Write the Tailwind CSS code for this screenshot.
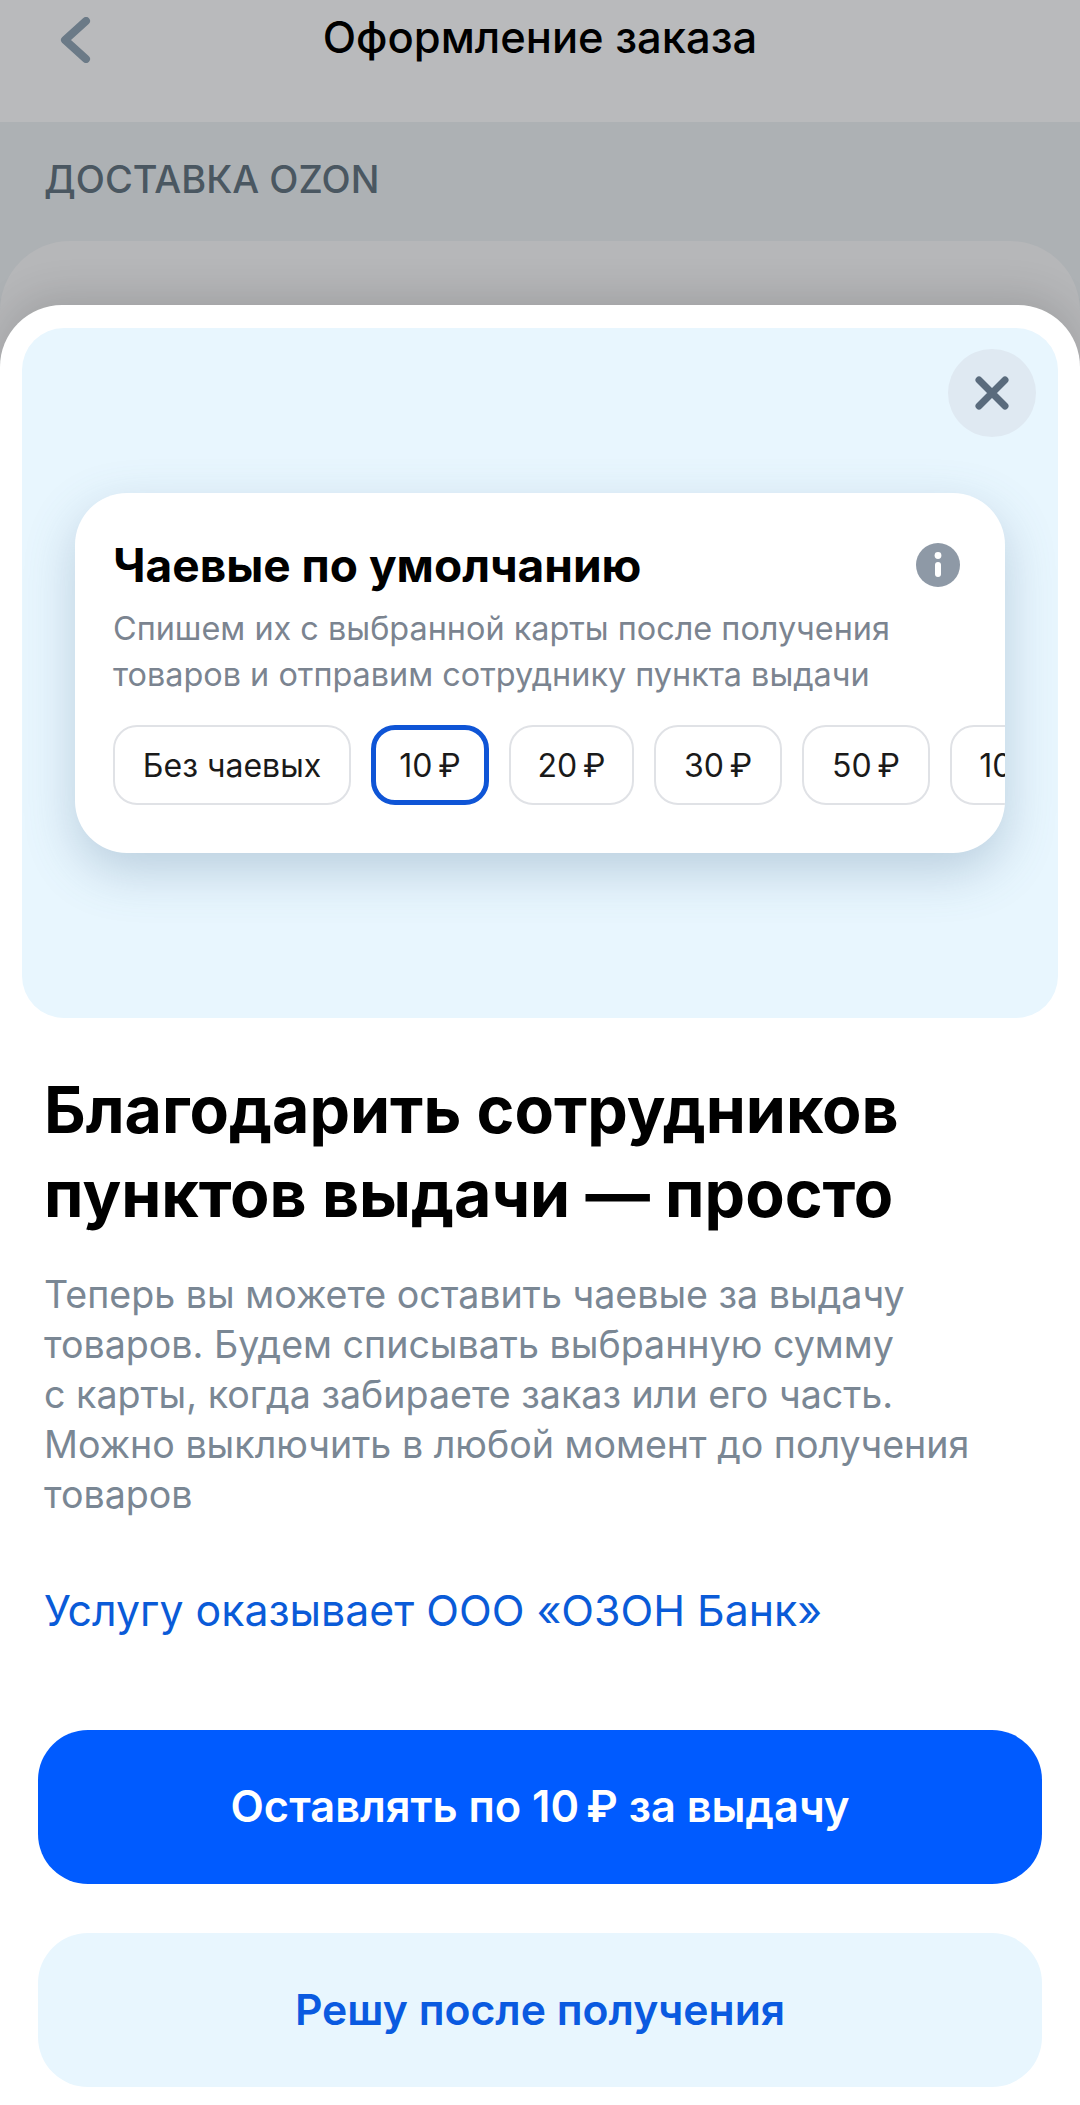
<!DOCTYPE html>
<html lang="ru">
<head>
    <meta charset="UTF-8">
    <meta name="viewport" content="width=device-width, initial-scale=1.0">
    <title>Оформление заказа</title>
    <script src="https://cdn.jsdelivr.net/npm/@tailwindcss/browser@4"></script>
</head>
<body class="font-['Inter','Noto_Sans',sans-serif] bg-[#adb1b4]">
<div class="relative w-[1080px] h-[2105px] overflow-hidden bg-[#adb1b4]">

    <!-- Page behind the sheet -->
    <header class="h-[122px] bg-[#b9babc] relative flex justify-center pt-[11px]">
        <svg class="absolute left-[58px] top-[17px]" width="34" height="46" viewBox="0 0 34 46" fill="none">
            <path d="M28 4 L7 23 L28 42" stroke="#6b7a87" stroke-width="8" stroke-linecap="round" stroke-linejoin="round"/>
        </svg>
        <h1 class="text-[43.5px] leading-[52px] font-medium text-black">Оформление заказа</h1>
    </header>
    <p class="pl-[44px] pt-[35px] text-[38px] leading-[44px] font-medium text-[#4a5761]">ДОСТАВКА OZON</p>
    <div class="mt-[40px] h-[300px] rounded-t-[70px] bg-[#b6b7b9]"></div>

    <!-- Bottom sheet -->
    <section class="absolute left-0 right-0 top-[305px] bottom-0 bg-white rounded-t-[62px] shadow-[0_-10px_40px_rgba(0,0,0,0.12)] pt-[23px]">
        <div class="relative mx-[22px] h-[690px] rounded-[42px] bg-[#e8f6fe] pt-[165px] pl-[53px]">
            <button class="absolute right-[22px] top-[21px] w-[88px] h-[88px] rounded-full bg-[#dfe9f2] flex items-center justify-center">
                <svg width="36" height="36" viewBox="0 0 36 36" fill="none">
                    <path d="M5 5 L31 31 M31 5 L5 31" stroke="#5a6b7d" stroke-width="7" stroke-linecap="round"/>
                </svg>
            </button>

            <!-- Tips card -->
            <div class="w-[930px] h-[360px] rounded-[52px] bg-white overflow-hidden shadow-[0_18px_50px_rgba(80,115,150,0.30)] pl-[38px] pt-[46px]">
                <div class="flex items-center justify-between pr-[45px] h-[52px]">
                    <h3 class="text-[46px] leading-[52px] font-bold text-black">Чаевые по умолчанию</h3>
                    <svg width="44" height="44" viewBox="0 0 44 44">
                        <circle cx="22" cy="22" r="22" fill="#8e99a6"/>
                        <circle cx="22" cy="12.5" r="3.4" fill="#fff"/>
                        <rect x="19" y="19" width="6" height="15" rx="3" fill="#fff"/>
                    </svg>
                </div>
                <p class="mt-[15px] text-[32.4px] leading-[46px] text-[#7b8490] whitespace-nowrap">Спишем их с выбранной карты после получения<br>товаров и отправим сотруднику пункта выдачи</p>
                <div class="mt-[27px] flex gap-[20px] text-[32px] text-[#1a1a1a] whitespace-nowrap">
                    <div class="w-[238px] h-[80px] shrink-0 rounded-[24px] border-2 border-[#e0e2e6] flex items-center justify-center pt-[2px]">Без чаевых</div>
                    <div class="w-[118px] h-[80px] shrink-0 rounded-[24px] border-[5px] border-[#0f55d6] flex items-center justify-center pt-[2px]">10&thinsp;₽</div>
                    <div class="w-[125px] h-[80px] shrink-0 rounded-[24px] border-2 border-[#e0e2e6] flex items-center justify-center pt-[2px]">20&thinsp;₽</div>
                    <div class="w-[128px] h-[80px] shrink-0 rounded-[24px] border-2 border-[#e0e2e6] flex items-center justify-center pt-[2px]">30&thinsp;₽</div>
                    <div class="w-[128px] h-[80px] shrink-0 rounded-[24px] border-2 border-[#e0e2e6] flex items-center justify-center pt-[2px]">50&thinsp;₽</div>
                    <div class="w-[140px] h-[80px] shrink-0 rounded-[24px] border-2 border-[#e0e2e6] flex items-center justify-center pt-[2px]">100&thinsp;₽</div>
                </div>
            </div>
        </div>

        <div class="px-[44px]">
            <h2 class="mt-[50px] text-[64.4px] leading-[84px] font-bold text-black whitespace-nowrap">Благодарить сотрудников<br>пунктов выдачи — просто</h2>
            <p class="mt-[34px] text-[37.6px] leading-[50px] text-[#7a8794] whitespace-nowrap">Теперь вы можете оставить чаевые за выдачу<br>товаров. Будем списывать выбранную сумму<br>с карты, когда забираете заказ или его часть.<br>Можно выключить в любой момент до получения<br>товаров</p>
            <a href="#" class="block mt-[65px] text-[42.8px] leading-[52px] text-[#0a5bd8] whitespace-nowrap">Услугу оказывает ООО «ОЗОН Банк»</a>
        </div>

        <div class="mt-[93px] px-[38px] flex flex-col gap-[49px]">
            <button class="h-[154px] rounded-[50px] bg-[#005bff] text-white text-[43.4px] font-semibold">Оставлять по 10&thinsp;₽ за выдачу</button>
            <button class="h-[154px] rounded-[50px] bg-[#e8f6fe] text-[#0a5ae0] text-[42.7px] font-semibold">Решу после получения</button>
        </div>
    </section>
</div>
</body>
</html>
